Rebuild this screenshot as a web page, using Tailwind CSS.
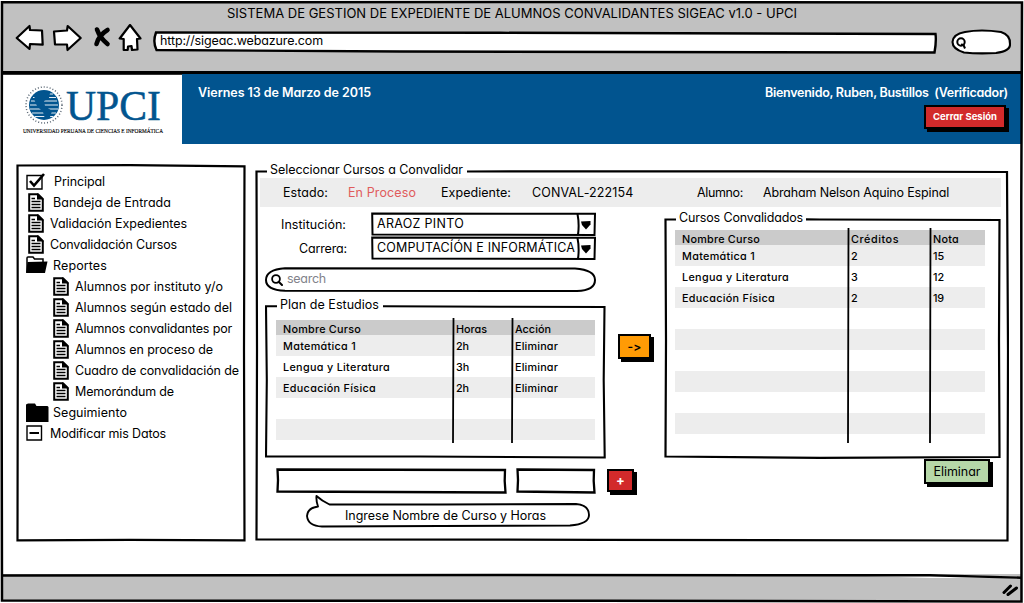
<!DOCTYPE html>
<html lang="es">
<head>
<meta charset="utf-8">
<title>SIGEAC</title>
<script src="https://cdn.jsdelivr.net/npm/@tailwindcss/browser@4"></script>
</head>
<body class="h-[603px] w-[1024px] overflow-hidden bg-white font-['Inter',sans-serif] [font-feature-settings:'cv11'] text-[12.5px] font-normal text-black">
<svg class="hidden">
  <symbol id="doc" viewBox="0 0 16 19">
    <path d="M1.2 1.2H10L14.8 6V17.8H1.2Z" fill="#fff" stroke="#000" stroke-width="2"/>
    <path d="M9 0L16 6.5H9Z" fill="#000"/>
    <path d="M3.5 5.500H7M3.500 8.500H12.500M3.500 11.500H12.500M3.500 14.500H12.500" stroke="#000" stroke-width="1.4" fill="none"/>
  </symbol>
  <symbol id="lens" viewBox="0 0 12 12">
    <circle cx="5" cy="5" r="3.9" fill="none" stroke="#000" stroke-width="1.8"/>
    <path d="M7.7 7.7L11 11" stroke="#000" stroke-width="2" stroke-linecap="round"/>
  </symbol>
</svg>
<div class="relative flex h-[603px] w-[1024px] flex-col px-[3px] pt-[3px]">
  <!-- Browser bar -->
  <header class="flex h-[71px] flex-col bg-[#c1c1c1]">
    <div class="flex h-[21px] items-center pl-[224px] text-[13px]"><span class="mt-px" data-w="570">SISTEMA DE GESTION DE EXPEDIENTE DE ALUMNOS CONVALIDANTES SIGEAC v1.0 - UPCI</span></div>
    <div class="flex h-[34px]">
      <svg class="h-[34px] w-[148px]" viewBox="3 23 148 34" fill="#fff" stroke="#000" stroke-width="2.2" stroke-linejoin="round">
        <path d="M16.7 37L29.5 25L30 29L42 29.500L42.700 43.700L30 43L29.500 48Z"/>
        <path d="M54 30.500L67 29.500L67.700 25L80.700 37L67.500 49L67 43.500L55 43.500Z"/>
        <path d="M97 28.500Q100 37 107.500 43M107.500 29Q99 34 96.500 43" fill="none" stroke-width="4.600" stroke-linecap="round"/>
        <path d="M130 24L119.700 37.500L123.700 38L123.700 49L127.700 49L128 45.500L131.500 45L132 49L137.500 48.500L137 38L140.500 37.500Z"/>
      </svg>
      <div class="relative flex h-[34px] w-[790px] items-center pl-[9px]">
        <svg class="absolute inset-0 h-[34px] w-[790px]" viewBox="151 23 790 34"><path d="M156 31.500L500 31.800L935.500 33Q936.500 40 934.500 51.500L400 50.500L156.500 49Q152.500 41 156 31.500Z" fill="#fff" stroke="#000" stroke-width="2.4"/></svg>
        <span class="relative" data-w="163">http://sigeac.webazure.com</span>
      </div>
      <div class="h-[34px] w-[76px]">
        <svg class="h-[34px] w-[76px]" viewBox="941 23 76 34"><path d="M965 31Q981 28 1001 31Q1010.500 34 1010 43Q1010.500 50 996 52Q978 53 964 51.500Q952.500 48 952.500 41Q953 33 965 31Z" fill="#fff" stroke="#000" stroke-width="2.1"/><circle cx="961" cy="41" r="3.700" fill="none" stroke="#000" stroke-width="2"/><path d="M961 43.500L963.500 44L965 47.500" stroke="#000" stroke-width="2" fill="none"/></svg>
      </div>
    </div>
    <div class="mt-[13px] h-[3px] bg-black"></div>
  </header>

  <!-- Site banner -->
  <div class="flex h-[70px]">
    <div class="h-[70px] w-[179px]">
      <svg class="h-[70px] w-[179px]" viewBox="3 74 179 70">
        <path d="M3 74.3H182" stroke="#000" stroke-width="1"/>
        <circle cx="44" cy="105" r="18" fill="none" stroke="#234" stroke-width="1.5" stroke-dasharray="1 2" opacity=".75"/>
        <circle cx="44" cy="105" r="15" fill="#02558f"/>
        <path d="M36 94H53M33 97.500H56M31 101H57M30 105H58M30 109H58M32 113H56M35 116.500H53" stroke="#fff" stroke-width=".9"/>
        <path d="M36 93L42 91.500L50 93L49 98L44 101L45 106L52 111L50 117L45 119L43 112L37 106L34 99Z" fill="#02558f"/>
        <text x="66" y="120" font-family="Liberation Serif, serif" font-size="42.500" fill="#02558f" stroke="#02558f" stroke-width=".5" textLength="95" lengthAdjust="spacingAndGlyphs">UPCI</text>
        <text x="23" y="133" font-family="Liberation Serif, serif" font-size="6.2" fill="#000" stroke="#000" stroke-width=".15" textLength="140" lengthAdjust="spacingAndGlyphs">UNIVERSIDAD PERUANA DE CIENCIAS E INFORMÁTICA</text>
      </svg>
    </div>
    <div class="flex grow justify-between bg-[#01548f] pl-[16px] font-semibold text-white">
      <span class="mt-[9px] h-5 leading-5" data-w="173">Viernes 13 de Marzo de 2015</span>
      <div class="mr-[13px] flex flex-col items-end">
        <span class="mt-[9px] h-5 leading-5 whitespace-pre" data-w="243">Bienvenido, Ruben, Bustillos  (Verificador)</span>
        <button class="mt-[2px] mr-[2px] flex h-6 w-[82px] items-center justify-center border-2 border-black bg-[#d22a2b] pt-px text-[9.5px] font-bold shadow-[3px_3px_0_#000]"><span data-w="64">Cerrar Sesión</span></button>
      </div>
    </div>
  </div>

  <div class="flex h-[430px] gap-[9px] pt-5 pl-[13px]">
    <!-- Navigation -->
    <nav class="relative h-[378px] w-[230px] pt-[7px] pl-[10px]">
      <svg class="absolute inset-0 h-[378px] w-[230px]" viewBox="16 164 230 378" fill="none" stroke="#000" stroke-width="2.2"><path d="M17.500 165.500L130 165.200L244.500 166.300L244 350L244.500 540.300L130 539.800L17.500 540.300L17.800 350Z"/></svg>
      <ul class="relative [&>li]:flex [&>li]:h-[21px] [&>li]:items-center [&>li>span]:mt-[2px] [&>li>svg]:-mt-px">
        <li><svg class="mr-[8px] h-[19px] w-[20px]" viewBox="0 0 20 19" fill="none" stroke="#000"><path d="M1 3.500H16V17H1Z" fill="#fff" stroke-width="1.4"/><path d="M4 9L8 13.500L18 2" stroke-width="2.6"/></svg><span data-w="51">Principal</span></li>
        <li><svg class="mr-[8px] ml-[2px] h-[19px] w-[16px]"><use href="#doc"/></svg><span class="ml-px" data-w="118">Bandeja de Entrada</span></li>
        <li><svg class="mr-[6px] ml-[2px] h-[19px] w-[16px]"><use href="#doc"/></svg><span data-w="137">Validación Expedientes</span></li>
        <li><svg class="mr-[6px] ml-[2px] h-[19px] w-[16px]"><use href="#doc"/></svg><span data-w="127">Convalidación Cursos</span></li>
        <li><svg class="mr-[5px] h-[18px] w-[22px]" viewBox="0 0 22 18"><path d="M1 16V2Q1 1 2 1H7L8.500 3H17V7" fill="#fff" stroke="#000" stroke-width="1.5"/><path d="M0 17L1.500 6L21.500 5.500L19 17Z"/></svg><span data-w="54">Reportes</span></li>
        <li class="pl-[27px]"><svg class="mr-[6px] h-[19px] w-[16px]"><use href="#doc"/></svg><span data-w="148">Alumnos por instituto y/o</span></li>
        <li class="pl-[27px]"><svg class="mr-[6px] h-[19px] w-[16px]"><use href="#doc"/></svg><span data-w="157">Alumnos según estado del</span></li>
        <li class="pl-[27px]"><svg class="mr-[6px] h-[19px] w-[16px]"><use href="#doc"/></svg><span data-w="157">Alumnos convalidantes por</span></li>
        <li class="pl-[27px]"><svg class="mr-[6px] h-[19px] w-[16px]"><use href="#doc"/></svg><span data-w="138">Alumnos en proceso de</span></li>
        <li class="pl-[27px]"><svg class="mr-[6px] h-[19px] w-[16px]"><use href="#doc"/></svg><span data-w="164">Cuadro de convalidación de</span></li>
        <li class="pl-[27px]"><svg class="mr-[6px] h-[19px] w-[16px]"><use href="#doc"/></svg><span data-w="99">Memorándum de</span></li>
        <li><svg class="mr-[4px] h-[19px] w-[23px]" viewBox="0 0 23 19"><path d="M0 19V1.500L2 .5H9L10.500 3H21.500L22.500 4V19Z"/></svg><span data-w="74">Seguimiento</span></li>
        <li><svg class="mr-[7px] h-[16px] w-[17px]" viewBox="0 0 17 16"><path d="M1 1H15.500V15H1Z" fill="#fff" stroke="#000" stroke-width="1.4"/><path d="M3.500 8H13" stroke="#000" stroke-width="2"/></svg><span data-w="116">Modificar mis Datos</span></li>
      </ul>
    </nav>

    <!-- Course selection -->
    <main class="relative flex h-[378px] w-[754px] flex-col">
      <svg class="absolute inset-0 h-[378px] w-[754px]" viewBox="255 164 754 378" fill="none" stroke="#000" stroke-width="2.2"><path d="M267 171.500L256.500 171.500L257 350L256.500 539.500L600 539.800L1007.500 540.500L1008 350L1007 172L700 171.300L467 171.500"/></svg>
      <h1 class="relative flex h-[14px] items-center pl-[15px]"><span class="-mt-px" data-w="193">Seleccionar Cursos a Convalidar</span></h1>
      <div class="relative ml-[5px] flex h-[29px] w-[741px] items-center bg-[#ededed] pt-[2px] pl-[23px]">
        <span data-w="45">Estado:</span><span class="ml-[20px] text-[#e05c5c]" data-w="68">En Proceso</span>
        <span class="ml-[25px]" data-w="70">Expediente:</span><span class="ml-[21px]" data-w="101">CONVAL-222154</span>
        <span class="ml-[64px]" data-w="46">Alumno:</span><span class="ml-[20px]" data-w="186">Abraham Nelson Aquino Espinal</span>
      </div>
      <div class="relative flex">
        <div class="w-[353px] pt-[5px] pl-[10px]">
          <div class="flex h-6 items-center"><span class="mt-[2px] ml-[16px]" data-w="65">Institución:</span>
            <div class="relative ml-[25px] flex h-6 w-[225px] items-center pl-[6px]"><svg class="absolute inset-0 h-6 w-[225px]" viewBox="0 0 225 24" fill="none" stroke="#000" stroke-width="2"><path d="M1.200 1.500L224 1.800L223.500 23L1.500 22.500ZM206.500 2Q208.500 12 207 23"/><path d="M210 9.500L219.500 9V12.500L215 17.500L211 13Z" fill="#000" stroke="none"/></svg><span class="relative" data-w="87">ARAOZ PINTO</span></div>
          </div>
          <div class="flex h-6 items-center"><span class="mt-[2px] ml-[34px]" data-w="48">Carrera:</span>
            <div class="relative ml-[24px] flex h-6 w-[225px] items-center pl-[6px]"><svg class="absolute inset-0 h-6 w-[225px]" viewBox="0 0 225 24" fill="none" stroke="#000" stroke-width="2"><path d="M1.200 1.500L224 1.800L223.500 23L1.500 22.500ZM206.500 2Q208.500 12 207 23"/><path d="M210 9.500L219.500 9V12.500L215 17.500L211 13Z" fill="#000" stroke="none"/></svg><span class="relative" data-w="198">COMPUTACÍÓN E INFORMÁTICA</span></div>
          </div>
          <div class="relative mt-[7px] flex h-[25px] w-[331px] items-center pl-[6px] text-[#82828a]">
            <svg class="absolute inset-0 h-[25px] w-[331px]" viewBox="0 0 331 25" fill="none" stroke="#000" stroke-width="2"><path d="M20 1.200L310 1.500Q330 3 330 13Q330 23.500 312 24L20 23.800Q1 23 1 13Q1 2.500 20 1.200Z"/></svg>
            <svg class="relative mr-[4px] h-3 w-3"><use href="#lens"/></svg><span class="relative" data-w="39">search</span>
          </div>
          <section class="relative mt-[5px] h-[163px] w-[342px]">
            <svg class="absolute inset-0 h-[163px] w-[342px]" viewBox="265 297 342 163" fill="none" stroke="#000" stroke-width="2.1"><path d="M277 306.300L266 306.300L266.800 380L266 456.500L420 456.500L604.700 457.500L603.700 380L604.500 307L500 306.800L383 306.300"/></svg>
            <h2 class="relative flex h-[14px] items-center pt-[2px] pl-[15px]"><span data-w="99">Plan de Estudios</span></h2>
            <div class="relative mt-[9px] ml-[11px] w-[319px] text-[10.8px] font-medium">
              <div class="grid h-[15px] grid-cols-[180px_59px_80px] items-center bg-[#cbcbcb] leading-[15px]"><span class="mt-[2px] ml-[7px]" data-w="78">Nombre Curso</span><span class="mt-[2px]" data-w="31">Horas</span><span class="mt-[2px]" data-w="36">Acción</span></div>
              <div class="grid h-[21px] grid-cols-[180px_59px_80px] items-center bg-[#ededed] pt-[3px]"><span class="ml-[7px]" data-w="73">Matemática 1</span><span data-w="13">2h</span><span data-w="43">Eliminar</span></div>
              <div class="grid h-[21px] grid-cols-[180px_59px_80px] items-center pt-[3px]"><span class="ml-[7px]" data-w="107">Lengua y Literatura</span><span data-w="13">3h</span><span data-w="43">Eliminar</span></div>
              <div class="grid h-[21px] grid-cols-[180px_59px_80px] items-center bg-[#ededed] pt-[3px]"><span class="ml-[7px]" data-w="93">Educación Física</span><span data-w="13">2h</span><span data-w="43">Eliminar</span></div>
              <div class="h-[21px]"></div><div class="h-[21px] bg-[#ededed]"></div>
              <svg class="absolute -top-[2px] left-0 h-[125px] w-[319px]" viewBox="0 0 319 125" stroke="#000" stroke-width="1.8" fill="none"><path d="M177.500 0L177 125M236.500 0L236 125"/></svg>
            </div>
          </section>
          <div class="mt-[8px] ml-[11px] flex h-[26px] items-start">
            <svg class="h-[26px] w-[231px]" viewBox="0 0 231 26" fill="#fff" stroke="#000" stroke-width="2.3"><path d="M1.500 1.500L229 2L228.700 13L229.500 24.500L115 24L1.500 23.500L2 12Z"/></svg>
            <svg class="ml-[9px] h-[26px] w-[80px]" viewBox="0 0 80 26" fill="#fff" stroke="#000" stroke-width="2.3"><path d="M1.500 1.500L78 2L77.700 13L78.500 24.500L40 24L1.500 23.500L2 12Z"/></svg>
          </div>
          <div class="relative mt-[1px] ml-[41px] flex h-[33px] w-[284px] items-end pb-[3px] pl-[39px]">
            <svg class="absolute inset-0 h-[33px] w-[284px]" viewBox="306 495 284 33" fill="#fff" stroke="#000" stroke-width="1.9" stroke-linejoin="round"><path d="M329.500 504.500Q322 501 316.500 496Q316 501 318 506.500Q307.500 508 307 516Q308 526 322 526.500L440 526L570 525.500Q589 524 589 515Q589 505 576 504L440 504.500Z"/></svg>
            <span class="relative h-[18px] leading-[18px]" data-w="201">Ingrese Nombre de Curso y Horas</span>
          </div>
        </div>
        <div class="flex w-[56px] flex-col items-start">
          <button class="mt-[127px] ml-[10px] flex h-[25px] w-[33px] items-center justify-center border-2 border-black bg-[#ff9b05] text-[12px] font-semibold shadow-[3px_3px_0_#000] [font-feature-settings:'calt'_0]"><span data-w="14">-&gt;</span></button>
          <button class="mt-[110px] -ml-px flex h-[23px] w-[27px] items-center justify-center border-2 border-black bg-[#d22a2b] text-[13px] font-bold text-white shadow-[3px_3px_0_#000]">+</button>
        </div>
        <div class="flex flex-col">
          <section class="relative mt-[3px] h-[249px] w-[337px]">
            <svg class="absolute inset-0 h-[249px] w-[337px]" viewBox="664 210 337 249" fill="none" stroke="#000" stroke-width="2.2"><path d="M676 219.500L665.500 219.500L666 340L665.500 456.500L820 457.800L999.500 457L999 340L999.500 220L820 219.500L806 219.300"/></svg>
            <h2 class="relative flex h-[14px] items-center pt-[2px] pl-[15px]"><span data-w="124">Cursos Convalidados</span></h2>
            <div class="relative mt-[6px] ml-[11px] w-[310px] text-[10.8px] font-medium">
              <div class="grid h-[15px] grid-cols-[176px_82px_52px] items-center bg-[#cbcbcb] leading-[15px]"><span class="mt-[2px] ml-[7px]" data-w="78">Nombre Curso</span><span class="mt-[2px]" data-w="48">Créditos</span><span class="mt-[2px]" data-w="26">Nota</span></div>
              <div class="grid h-[21px] grid-cols-[176px_82px_52px] items-center bg-[#ededed] pt-[3px]"><span class="ml-[7px]" data-w="73">Matemática 1</span><span>2</span><span data-w="11">15</span></div>
              <div class="grid h-[21px] grid-cols-[176px_82px_52px] items-center pt-[3px]"><span class="ml-[7px]" data-w="107">Lengua y Literatura</span><span>3</span><span data-w="11">12</span></div>
              <div class="grid h-[21px] grid-cols-[176px_82px_52px] items-center bg-[#ededed] pt-[3px]"><span class="ml-[7px]" data-w="93">Educación Física</span><span>2</span><span data-w="11">19</span></div>
              <div class="h-[21px]"></div><div class="h-[21px] bg-[#ededed]"></div><div class="h-[21px]"></div><div class="h-[21px] bg-[#ededed]"></div><div class="h-[21px]"></div><div class="h-[21px] bg-[#ededed]"></div>
              <svg class="absolute -top-[2px] left-0 h-[215px] w-[310px]" viewBox="0 0 310 215" stroke="#000" stroke-width="1.8" fill="none"><path d="M173.500 0L173 215M255.500 0L255 215"/></svg>
            </div>
          </section>
          <button class="relative ml-[260px] flex h-[25px] w-[66px] items-center justify-center border-2 border-black bg-[#b6d7a8] pt-px shadow-[3px_3px_0_#000]"><span data-w="47">Eliminar</span></button>
        </div>
      </div>
    </main>
  </div>
  <footer class="h-[26px] bg-[#c1c1c1]"></footer>
  <!-- Hand-drawn window outline -->
  <svg class="pointer-events-none absolute inset-0 h-[603px] w-[1024px]" viewBox="0 0 1024 603" fill="none" stroke="#000">
    <path d="M2 2.300L500 2L1022 2.500L1021.300 200L1021.500 601.500L600 600.800L2 600.500L1.500 300Z" stroke-width="2.5"/>
    <path d="M800 574L930 574L1021 577V578H930Z" fill="#fff" stroke="none"/>
    <path d="M2 575.500L500 575L930 575.300L1021 577.700" stroke-width="2.4"/>
    <path d="M1004 592.500L1010.500 586M1008 594.500L1016.500 588" stroke-width="3" stroke-linecap="round"/>
  </svg>
</div>
<script>
  // Spread each label's letters so that it fills its data-w width.
  function fitLabels() {
    document.querySelectorAll('[data-w]').forEach(function (el) {
      var s = el.style;
      s.display = 'block';
      s.justifySelf = 'start';
      s.flex = 'none';
      s.letterSpacing = '0px';
      s.width = 'auto';
      if (!el.classList.contains('whitespace-pre')) s.whiteSpace = 'nowrap';
      var r = document.createRange();
      r.selectNodeContents(el);
      var w = r.getBoundingClientRect().width;
      s.letterSpacing = (el.dataset.w - w) / el.textContent.length + 'px';
      s.width = el.dataset.w + 'px';
    });
  }
  fitLabels();
  window.addEventListener('load', function () {
    fitLabels();
    requestAnimationFrame(fitLabels);
    document.fonts.ready.then(fitLabels);
    setTimeout(fitLabels, 60);
  });
</script>
</body>
</html>
